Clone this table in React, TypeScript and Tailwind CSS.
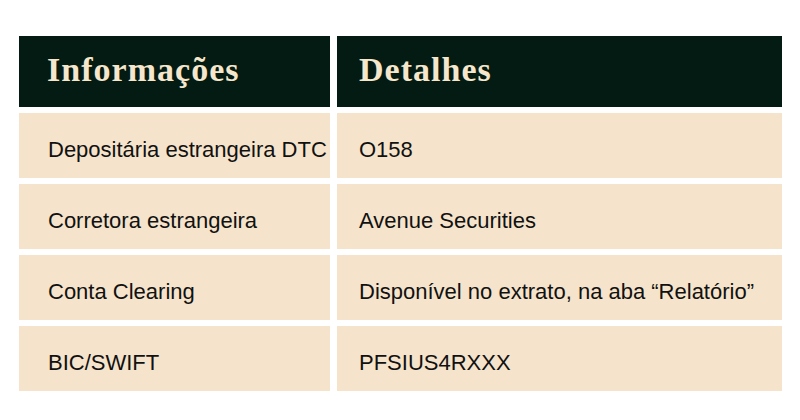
import React from "react";

const rows: [string, string][] = [
  ["Depositária estrangeira DTC", "O158"],
  ["Corretora estrangeira", "Avenue Securities"],
  ["Conta Clearing", "Disponível no extrato, na aba “Relatório”"],
  ["BIC/SWIFT", "PFSIUS4RXXX"],
];

export default function App() {
  return (
    <div className="w-[800px] h-[420px] bg-white pt-[36px] pl-[19px]">
      <div className="grid grid-cols-[311px_445px] gap-x-[7px]">
        <div className="h-[71px] bg-[#031b12] flex items-center pl-[28px] pb-[3px]">
          <span className="text-[#f5e6cc] text-[34px] font-bold tracking-[0.03em] font-['Liberation_Serif',serif] leading-none">
            Informações
          </span>
        </div>
        <div className="h-[71px] bg-[#031b12] flex items-center pl-[22px] pb-[3px]">
          <span className="text-[#f5e6cc] text-[34px] font-bold tracking-[0.03em] font-['Liberation_Serif',serif] leading-none">
            Detalhes
          </span>
        </div>
      </div>
      <div className="flex flex-col gap-[6px] mt-[6px]">
        {rows.map(([a, b]) => (
          <div key={a} className="grid grid-cols-[311px_445px] gap-x-[7px]">
            <div className="h-[65px] bg-[#f5e4cb] flex items-center pl-[29px] pt-[8px]">
              <span className="text-[22px] text-[#111111] font-['Liberation_Sans',sans-serif] leading-none whitespace-nowrap">
                {a}
              </span>
            </div>
            <div className="h-[65px] bg-[#f5e4cb] flex items-center pl-[22px] pt-[8px]">
              <span className="text-[22px] text-[#111111] font-['Liberation_Sans',sans-serif] leading-none whitespace-nowrap">
                {b}
              </span>
            </div>
          </div>
        ))}
      </div>
    </div>
  );
}
